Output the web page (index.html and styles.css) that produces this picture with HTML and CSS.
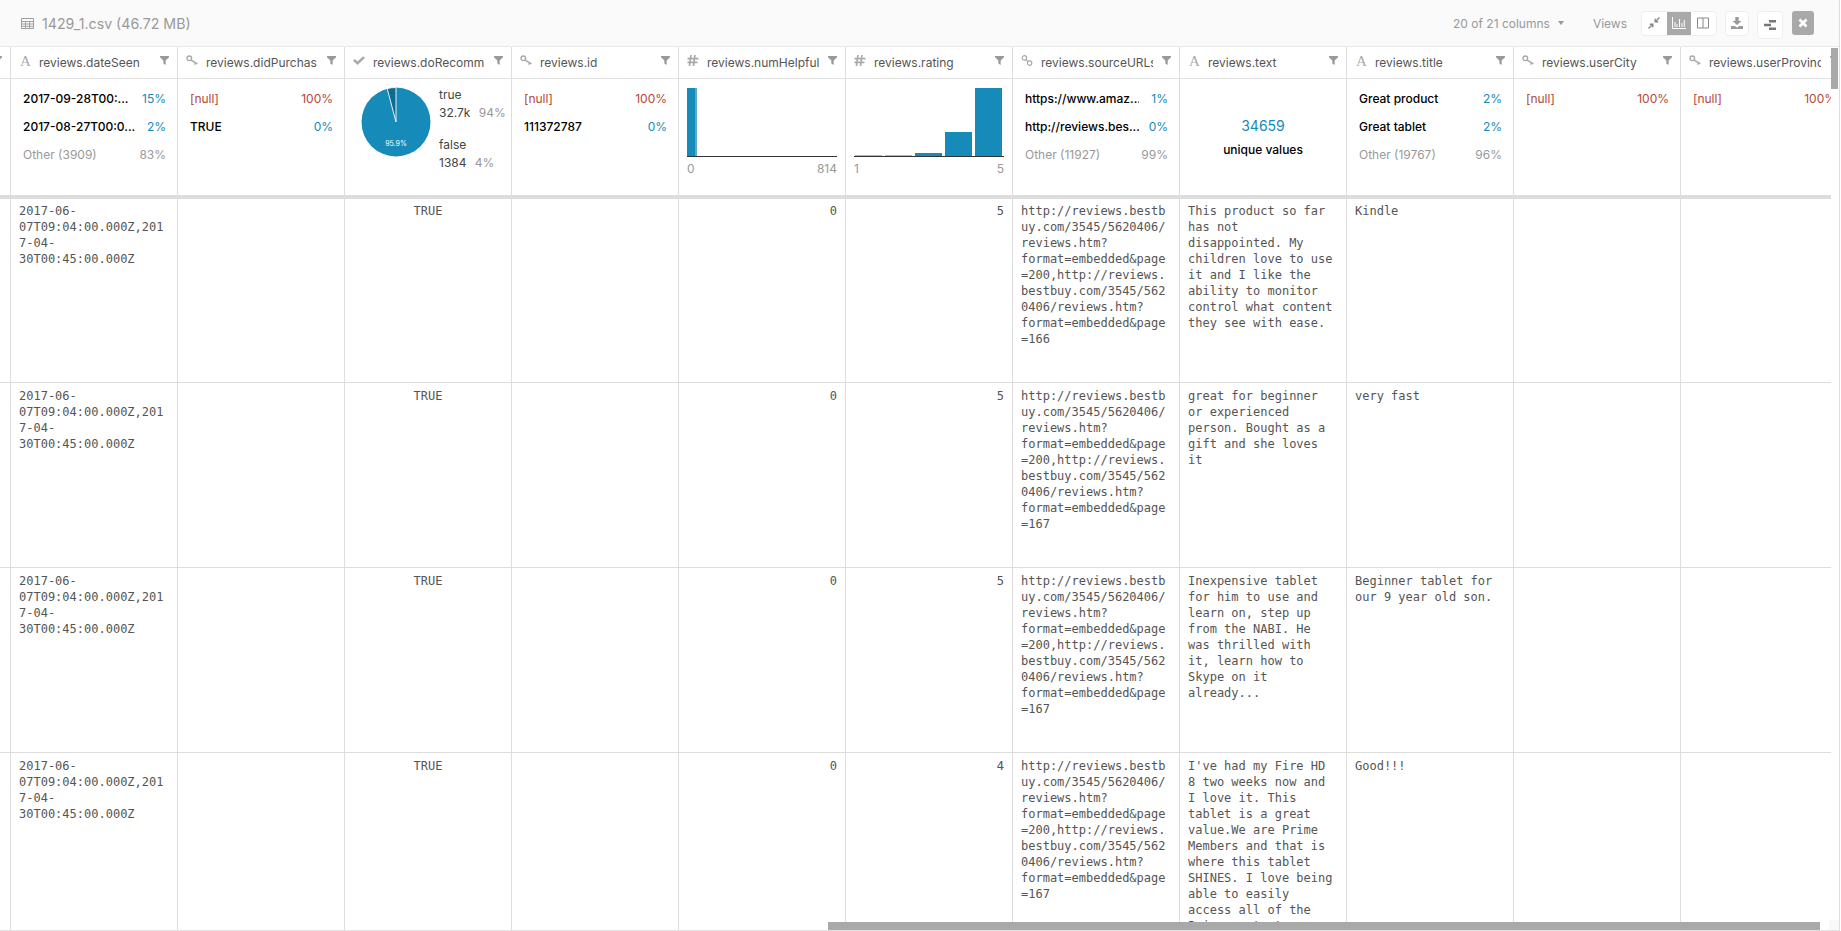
FILE: index.html
```html
<!DOCTYPE html>
<html lang="en">
<head>
  <meta charset="UTF-8">
  <meta name="viewport" content="width=device-width, initial-scale=1.0">
  <title>1429_1.csv</title>
  <link rel="stylesheet" href="styles.css">
</head>
<body>
<svg class="sprites" width="0" height="0">
  <symbol id="i-filter" viewBox="0 0 10 10"><path d="M0 0h10v1.4L6.3 5v5L3.7 8.4V5L0 1.4z"/></symbol>
  <symbol id="i-key" viewBox="0 0 12 11"><path d="M3.300 .3a3 3 0 1 1 0 6a3 3 0 0 1 0-6zm0 1.400a1.600 1.600 0 1 0 0 3.200a1.600 1.600 0 0 0 0-3.200z"/><path d="M5.500 4.400l6.300 3.900-.6 1.300-1.300-.8-.6 1.300-1.200-.7.500-1.300-1-.6-3-1.800z"/></symbol>
  <symbol id="i-check" viewBox="0 0 12 10"><path d="M0 5.2l1.9-1.8 2.6 2.500L10 .8 12 2.600 4.500 9.400z"/></symbol>
  <symbol id="i-hash" viewBox="0 0 11 11"><path d="M2.600 0h1.700l-.4 2.800h2.300L6.600 0h1.700l-.4 2.800H11v1.600H7.700l-.3 2.200H10v1.600H7.200L6.800 11H5.100l.4-2.800H3.200L2.800 11H1.100l.4-2.800H0V6.600h1.700L2 4.400H0V2.800h2.200zM3.700 4.400l-.3 2.200h2.300L6 4.400z"/></symbol>
  <symbol id="i-link" viewBox="0 0 11 11"><g fill="none" stroke="#aaa" stroke-width="1.200"><circle cx="2.900" cy="2.900" r="2.200"/><circle cx="8.100" cy="8.100" r="2.200"/><path d="M4.400 4.400l2.200 2.200"/></g></symbol>
</svg>

<div class="app">
  <div class="toolbar">
    <svg class="table-icon" viewBox="0 0 13 11"><path d="M.5.5h12v10H.5zM.5 3.500h12M.5 6h12M.5 8.300h12M4.500 3.500v7M8.500 3.500v7" fill="none" stroke="currentColor"/></svg>
    <span class="file-name">1429_1.csv (46.72 MB)</span>
    <span class="spacer"></span>
    <span class="columns-picker">20 of 21 columns<i class="caret"></i></span>
    <span class="views-label">Views</span>
    <div class="btn-group">
      <span class="tool-btn"><svg viewBox="0 0 12 12"><path d="M11.500 .5L7 5M7.200 1.800V4.800H10.200M.5 11.500L5 7M1.800 7.200H4.800V10.200" fill="none" stroke="currentColor" stroke-width="1.400"/></svg></span>
      <span class="tool-btn active"><svg viewBox="0 0 14 12"><path d="M.5 0v11.500H14M3 10V5M5 10V7M7.500 10V2M10 10V6M12.300 10V3" fill="none" stroke="currentColor"/></svg></span>
      <span class="tool-btn"><svg viewBox="0 0 12 12"><path d="M.5 1h11v10H.5zM6 1v10" fill="none" stroke="currentColor"/></svg></span>
    </div>
    <span class="tool-btn single download"><svg viewBox="0 0 12 12"><path d="M4.300 0h3.400v4H10.500L6 8 1.500 4H4.300zM0 9h3.500L6 10.500 8.500 9H12v3H0z"/></svg></span>
    <span class="tool-btn single relate"><svg viewBox="0 0 12 12"><path d="M5 1h7v2.400H5zM5 8.600h7V11H5zM0 4.800h7v2.400H0z"/></svg></span>
    <span class="close-btn"><svg viewBox="0 0 10 10"><path d="M1.500 1.500l7 7M8.500 1.500l-7 7" stroke="currentColor" stroke-width="2.600" fill="none"/></svg></span>
  </div>

  <div class="table">
    <div class="row head">
      <div class="cell"><svg class="filter"><use href="#i-filter"/></svg></div>
      <div class="cell"><span class="type serif">A</span><span class="col-name">reviews.dateSeen</span><svg class="filter"><use href="#i-filter"/></svg></div>
      <div class="cell"><svg class="type-icon"><use href="#i-key"/></svg><span class="col-name">reviews.didPurchas</span><svg class="filter"><use href="#i-filter"/></svg></div>
      <div class="cell"><svg class="type-icon"><use href="#i-check"/></svg><span class="col-name">reviews.doRecomm</span><svg class="filter"><use href="#i-filter"/></svg></div>
      <div class="cell"><svg class="type-icon"><use href="#i-key"/></svg><span class="col-name">reviews.id</span><svg class="filter"><use href="#i-filter"/></svg></div>
      <div class="cell"><svg class="type-icon"><use href="#i-hash"/></svg><span class="col-name">reviews.numHelpful</span><svg class="filter"><use href="#i-filter"/></svg></div>
      <div class="cell"><svg class="type-icon"><use href="#i-hash"/></svg><span class="col-name">reviews.rating</span><svg class="filter"><use href="#i-filter"/></svg></div>
      <div class="cell"><svg class="type-icon"><use href="#i-link"/></svg><span class="col-name">reviews.sourceURLs</span><svg class="filter"><use href="#i-filter"/></svg></div>
      <div class="cell"><span class="type serif">A</span><span class="col-name">reviews.text</span><svg class="filter"><use href="#i-filter"/></svg></div>
      <div class="cell"><span class="type serif">A</span><span class="col-name">reviews.title</span><svg class="filter"><use href="#i-filter"/></svg></div>
      <div class="cell"><svg class="type-icon"><use href="#i-key"/></svg><span class="col-name">reviews.userCity</span><svg class="filter"><use href="#i-filter"/></svg></div>
      <div class="cell"><svg class="type-icon"><use href="#i-key"/></svg><span class="col-name">reviews.userProvinc</span><svg class="filter"><use href="#i-filter"/></svg></div>
    </div>

    <div class="row stats">
      <div class="cell"></div>
      <div class="cell list">
        <div class="item"><span class="label">2017-09-28T00:...</span><span class="pct">15%</span></div>
        <div class="item"><span class="label">2017-08-27T00:0...</span><span class="pct">2%</span></div>
        <div class="item other"><span class="label">Other (3909)</span><span class="pct">83%</span></div>
      </div>
      <div class="cell list">
        <div class="item null"><span class="label">[null]</span><span class="pct">100%</span></div>
        <div class="item"><span class="label">TRUE</span><span class="pct">0%</span></div>
      </div>
      <div class="cell pie-cell">
        <svg class="pie" viewBox="-35 -35 70 70">
          <circle r="34.500" fill="#168ab9"/>
          <path d="M0 0L-8.800 -33.400A34.500 34.500 0 0 1 0 -34.500z" fill="#0f6a90" stroke="#fff" stroke-width=".9"/>
          <text class="pie-label" y="24">95.9%</text>
        </svg>
        <div class="legend">
          <div>true</div>
          <div>32.7k <span class="muted">94%</span></div>
          <div class="legend-gap">false</div>
          <div>1384 <span class="muted">4%</span></div>
        </div>
      </div>
      <div class="cell list">
        <div class="item null"><span class="label">[null]</span><span class="pct">100%</span></div>
        <div class="item"><span class="label">111372787</span><span class="pct">0%</span></div>
      </div>
      <div class="cell hist">
        <div class="bars single-bar"><span class="bar" style="height:68px"></span></div>
        <div class="axis"><span>0</span><span>814</span></div>
      </div>
      <div class="cell hist">
        <div class="bars">
          <span class="bar faint" style="height:1px"></span>
          <span class="bar faint" style="height:1px"></span>
          <span class="bar" style="height:3px"></span>
          <span class="bar" style="height:24px"></span>
          <span class="bar" style="height:68px"></span>
        </div>
        <div class="axis"><span>1</span><span>5</span></div>
      </div>
      <div class="cell list">
        <div class="item"><span class="label">https://www.amaz...</span><span class="pct">1%</span></div>
        <div class="item"><span class="label">http://reviews.bes...</span><span class="pct">0%</span></div>
        <div class="item other"><span class="label">Other (11927)</span><span class="pct">99%</span></div>
      </div>
      <div class="cell unique">
        <div class="unique-count">34659</div>
        <div class="unique-label">unique values</div>
      </div>
      <div class="cell list">
        <div class="item"><span class="label">Great product</span><span class="pct">2%</span></div>
        <div class="item"><span class="label">Great tablet</span><span class="pct">2%</span></div>
        <div class="item other"><span class="label">Other (19767)</span><span class="pct">96%</span></div>
      </div>
      <div class="cell list">
        <div class="item null"><span class="label">[null]</span><span class="pct">100%</span></div>
      </div>
      <div class="cell list">
        <div class="item null"><span class="label">[null]</span><span class="pct">100%</span></div>
      </div>
    </div>

    <div class="rows">
      <div class="row data">
        <div class="cell"></div>
        <div class="cell">2017-06-07T09:04:00.000Z,2017-04-30T00:45:00.000Z</div>
        <div class="cell"></div>
        <div class="cell center">TRUE</div>
        <div class="cell"></div>
        <div class="cell num">0</div>
        <div class="cell num">5</div>
        <div class="cell">http://reviews.bestbuy.com/3545/5620406/reviews.htm?format=embedded&amp;page=200,http://reviews.bestbuy.com/3545/5620406/reviews.htm?format=embedded&amp;page=166</div>
        <div class="cell">This product so far has not disappointed. My children love to use it and I like the ability to monitor control what content they see with ease.</div>
        <div class="cell">Kindle</div>
        <div class="cell"></div>
        <div class="cell"></div>
      </div>
      <div class="row data">
        <div class="cell"></div>
        <div class="cell">2017-06-07T09:04:00.000Z,2017-04-30T00:45:00.000Z</div>
        <div class="cell"></div>
        <div class="cell center">TRUE</div>
        <div class="cell"></div>
        <div class="cell num">0</div>
        <div class="cell num">5</div>
        <div class="cell">http://reviews.bestbuy.com/3545/5620406/reviews.htm?format=embedded&amp;page=200,http://reviews.bestbuy.com/3545/5620406/reviews.htm?format=embedded&amp;page=167</div>
        <div class="cell">great for beginner or experienced person. Bought as a gift and she loves it</div>
        <div class="cell">very fast</div>
        <div class="cell"></div>
        <div class="cell"></div>
      </div>
      <div class="row data">
        <div class="cell"></div>
        <div class="cell">2017-06-07T09:04:00.000Z,2017-04-30T00:45:00.000Z</div>
        <div class="cell"></div>
        <div class="cell center">TRUE</div>
        <div class="cell"></div>
        <div class="cell num">0</div>
        <div class="cell num">5</div>
        <div class="cell">http://reviews.bestbuy.com/3545/5620406/reviews.htm?format=embedded&amp;page=200,http://reviews.bestbuy.com/3545/5620406/reviews.htm?format=embedded&amp;page=167</div>
        <div class="cell">Inexpensive tablet for him to use and learn on, step up from the NABI. He was thrilled with it, learn how to Skype on it already...</div>
        <div class="cell">Beginner tablet for our 9 year old son.</div>
        <div class="cell"></div>
        <div class="cell"></div>
      </div>
      <div class="row data">
        <div class="cell"></div>
        <div class="cell">2017-06-07T09:04:00.000Z,2017-04-30T00:45:00.000Z</div>
        <div class="cell"></div>
        <div class="cell center">TRUE</div>
        <div class="cell"></div>
        <div class="cell num">0</div>
        <div class="cell num">4</div>
        <div class="cell">http://reviews.bestbuy.com/3545/5620406/reviews.htm?format=embedded&amp;page=200,http://reviews.bestbuy.com/3545/5620406/reviews.htm?format=embedded&amp;page=167</div>
        <div class="cell">I've had my Fire HD 8 two weeks now and I love it. This tablet is a great value.We are Prime Members and that is where this tablet SHINES. I love being able to easily access all of the Prime content as well as the Kindle store.</div>
        <div class="cell">Good!!!</div>
        <div class="cell"></div>
        <div class="cell"></div>
      </div>
    </div>
  </div>

  <div class="scroll-v"></div>
  <div class="scroll-h"></div>
  <div class="scroll-corner"></div>
</div>
</body>
</html>
```

FILE: styles.css
```css
* {
  box-sizing: border-box;
}
html, body {
  margin: 0;
  height: 100%;
  overflow: hidden;
  background: white;
}
body {
  font-family: Inter, 'Noto Sans', sans-serif;
  font-size: 12px;
  color: #555;
}
.sprites {
  position: absolute;
}
.app {
  position: relative;
  width: 1840px;
  height: 931px;
  border-right: 1px solid #ddd;
  border-bottom: 1px solid #e2e2e2;
  overflow: hidden;
}

/* toolbar */
.toolbar {
  display: flex;
  align-items: center;
  height: 47px;
  padding: 0 25px 0 21px;
  background: #fafafa;
  border-bottom: 1px solid #e8e8e8;
  color: #999;
}
.table-icon {
  width: 13px;
  height: 11px;
  margin-right: 8px;
  color: #a0a0a0;
}
.file-name {
  font-size: 14.2px;
}
.spacer {
  flex: 1;
}
.columns-picker {
  display: flex;
  align-items: center;
}
.caret {
  width: 0;
  height: 0;
  margin-left: 8px;
  border: 3.5px solid transparent;
  border-top: 4px solid #999;
  border-bottom: 0;
}
.views-label {
  margin: 0 14px 0 29px;
}
.btn-group {
  display: flex;
  align-items: stretch;
  height: 25px;
  border: 1px solid #eee;
  border-radius: 4px;
  background: white;
  overflow: hidden;
}
.tool-btn {
  display: flex;
  align-items: center;
  justify-content: center;
  width: 24.5px;
  color: #888;
}
.tool-btn svg {
  width: 12px;
  height: 12px;
  fill: currentColor;
}
.tool-btn.active {
  background: #a9a9a9;
  color: white;
}
.tool-btn.active svg {
  width: 14px;
}
.single {
  height: 25px;
  background: white;
  border: 1px solid #eee;
  border-radius: 4px;
}
.download {
  margin-left: 8px;
  color: #999;
}
.relate {
  width: 26px;
  height: 28px;
  margin: 3px 0 0 8px;
  color: #777;
}
.close-btn {
  display: flex;
  align-items: center;
  justify-content: center;
  width: 22px;
  height: 24px;
  margin-left: 9px;
  background: #a9a9a9;
  border-radius: 3px;
  color: white;
}
.close-btn svg {
  width: 10px;
  height: 10px;
}

/* table */
.table {
  width: 1831px;
  height: 883px;
  overflow: hidden;
}
.row {
  display: flex;
  margin-left: -156px;
}
.cell {
  position: relative;
  flex: 0 0 167px;
  width: 167px;
  border-right: 1px solid #ddd;
}

.head {
  height: 32px;
  border-bottom: 1px solid #e2e2e2;
}
.head .cell {
  display: flex;
  align-items: center;
  height: 31px;
  padding-left: 8px;
}
.type {
  width: 20px;
  flex: none;
  color: #aaa;
  font-size: 14px;
  line-height: 20px;
  padding-left: 1px;
}
.serif {
  font-family: 'Liberation Serif', serif;
  font-size: 15px;
  margin-top: -3px;
}
.type-icon {
  width: 12px;
  height: 11px;
  margin: -4px 8px 0 0;
  flex: none;
  fill: #aaa;
}
.col-name {
  width: 112px;
  flex: none;
  overflow: hidden;
  white-space: nowrap;
  color: #555;
}
.filter {
  position: absolute;
  top: 9px;
  right: 8px;
  width: 9px;
  height: 9px;
  fill: #999;
}

.stats {
  position: relative;
  z-index: 1;
  height: 120px;
  background: white;
  border-bottom: 4px solid #ddd;
}
.list {
  padding: 6px 11px 0 12px;
}
.item {
  display: flex;
  justify-content: space-between;
  line-height: 28px;
  color: #000;
  font-weight: 500;
}
.label {
  width: 114px;
  overflow: hidden;
  white-space: nowrap;
}
.pct {
  color: #168ab9;
  font-weight: 400;
}
.item.null .label,
.item.null .pct {
  color: #b5483a;
  font-weight: 400;
}
.item.other .label,
.item.other .pct {
  color: #999;
  font-weight: 400;
}

.pie-cell {
  display: flex;
  padding: 7px 0 0 16px;
}
.pie {
  width: 70px;
  height: 70px;
  margin: 1px 8px 0 0;
}
.pie-label {
  fill: white;
  font-size: 7px;
  text-anchor: middle;
}
.legend {
  line-height: 18px;
  color: #444;
  white-space: nowrap;
}
.legend-gap {
  margin-top: 14px;
}
.muted {
  margin-left: 5px;
  color: #999;
}

.hist {
  padding: 9px 8px 0;
}
.bars {
  display: flex;
  align-items: flex-end;
  gap: 3px;
  height: 69px;
  padding: 0 2px 0 1px;
  border-bottom: 1px solid #333;
}
.bar {
  flex: 1;
  background: #168ab9;
}
.bar.faint {
  background: #8cc4dc;
}
.single-bar {
  padding: 0;
}
.single-bar .bar {
  flex: 0 0 10px;
  border-right: 2px solid #5aa9cb;
}
.axis {
  display: flex;
  justify-content: space-between;
  margin-top: 4px;
  line-height: 16px;
  color: #999;
}

.unique {
  display: flex;
  flex-direction: column;
  align-items: center;
  justify-content: center;
  gap: 6px;
}
.unique-count {
  font-size: 14px;
  line-height: 20px;
  color: #168ab9;
}
.unique-label {
  line-height: 16px;
  font-weight: 500;
  color: #000;
}

.rows {
  margin-top: -1px;
}
.data {
  height: 185px;
  overflow: hidden;
  border-bottom: 1px solid #ddd;
  font-family: 'DejaVu Sans Mono', 'Liberation Mono', monospace;
  font-size: 12px;
  line-height: 16px;
  color: #555;
}
.data .cell {
  padding: 5px 8px 0;
  overflow-wrap: break-word;
}
.data .center {
  text-align: center;
}
.data .num {
  text-align: right;
}

/* scrollbars */
.scroll-v {
  position: absolute;
  top: 48px;
  left: 1831px;
  width: 7px;
  height: 41px;
  background: #a9a9a9;
}
.scroll-h {
  position: absolute;
  left: 828px;
  top: 922px;
  width: 992px;
  height: 8px;
  background: #a9a9a9;
}
.scroll-corner {
  position: absolute;
  left: 1829px;
  top: 920px;
  width: 10px;
  height: 10px;
  background: #f9f9f9;
}
```
